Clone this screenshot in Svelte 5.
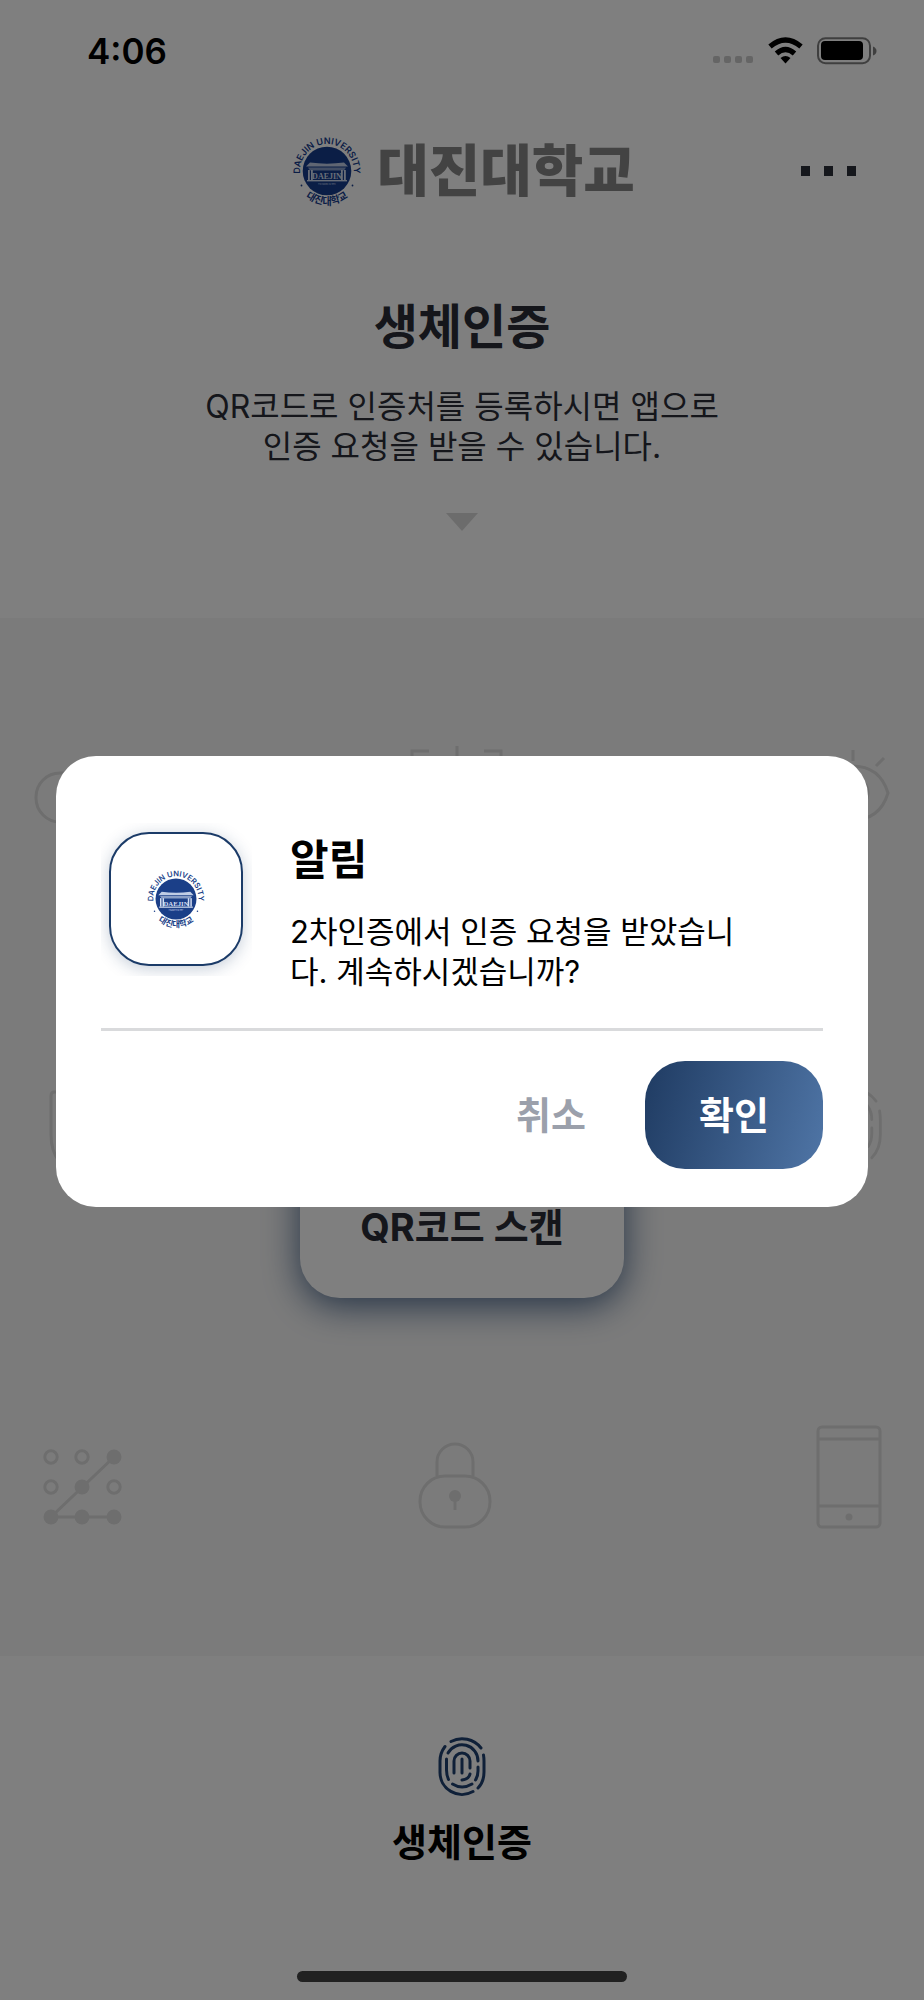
<script lang="ts">
  const seals = { header: 'seal-header', dialog: 'seal-dialog' };
  const columns = [-18, -15, 15, 18];
</script>

{#snippet seal(id: string)}
  <svg class="seal" viewBox="-4 -4 76 76" role="img" aria-label="대진대학교">
    <defs>
      <path id="{id}-top" d="M14 52A26.900 26.900 0 1 1 54 52" />
      <path id="{id}-bottom" d="M2 44A33.500 33.500 0 0 0 66 44" />
    </defs>
    <circle cx="34" cy="34" r="24.300" fill="currentColor" />
    <text class="ring" text-anchor="middle"><textPath href="#{id}-top" startOffset="50%">DAEJIN UNIVERSITY</textPath></text>
    <text class="ring korean" text-anchor="middle"><textPath href="#{id}-bottom" startOffset="50%">대진대학교</textPath></text>
    <circle cx="8.500" cy="48.500" r="0.900" fill="currentColor" />
    <circle cx="59.500" cy="48.500" r="0.900" fill="currentColor" />
    <g class="hall">
      <path d="M17 25.500C28 27 40 27 51 25.500L55 29.500H13Z" opacity="0.900" />
      <path d="M15 30.500H53L51 33.500H17Z" opacity="0.600" />
      {#each columns as x}
        <rect x={33 + x} y="33" width="1.800" height="10" />
      {/each}
      <text x="34" y="42" text-anchor="middle" class="hall-name">DAEJIN</text>
      <rect x="14" y="43" width="40" height="1.400" />
      <text x="34" y="48" text-anchor="middle" class="founded">FOUNDED IN 1992</text>
    </g>
  </svg>
{/snippet}

{#snippet fingerprint()}
  <path d="M13 5.500A24 24 0 0 1 43 12" />
  <path d="M7 10.500Q2 17 2 25V36A22 22 0 0 0 35 55.500" />
  <path d="M45.500 19Q46 22 46 25V36Q46 46 40 52" />
  <path d="M10 17A16 16 0 0 1 40 25" />
  <path d="M8.500 23V34Q8.500 39 10.500 43.500" />
  <path d="M40 31V35Q40 40 37.500 44" />
  <path d="M14.500 48Q24 54 34 48" />
  <path d="M16 37V25A8 8 0 0 1 32 25V32" />
  <path d="M24 23V37" />
  <path d="M32 38Q31 43 24 44" />
{/snippet}

<div class="screen">
  <div class="status">
    <time>4:06</time>
    <svg class="indicators" viewBox="0 0 166 28" aria-hidden="true">
      <g opacity="0.200">
        <rect x="1" y="19" width="7" height="7" rx="2" />
        <rect x="12" y="19" width="7" height="7" rx="2" />
        <rect x="23" y="19" width="7" height="7" rx="2" />
        <rect x="34" y="19" width="7" height="7" rx="2" />
      </g>
      <path d="M73.500 26.500L68.500 21Q73.500 17 78.500 21Z" />
      <path d="M64.500 16.500Q73.500 8.500 82.500 16.500M58 9.500Q73.500 -3.500 89 9.500" fill="none" stroke="#000" stroke-width="5.200" />
      <rect x="106" y="1.200" width="52" height="25" rx="7.500" fill="none" stroke="#000" stroke-width="2" opacity="0.500" />
      <rect x="109" y="4" width="42" height="19" rx="4" />
      <path d="M161 9.500Q164.500 11 164.500 14T161 18.500Z" opacity="0.500" />
    </svg>
  </div>

  <header>
    <div class="brand">
      <div class="brand-seal">{@render seal(seals.header)}</div>
      <span class="brand-name">대진대학교</span>
    </div>
    <button class="more" aria-label="메뉴"><i></i><i></i><i></i></button>
  </header>

  <section class="intro">
    <h1>생체인증</h1>
    <p>QR코드로 인증처를 등록하시면 앱으로<br />인증 요청을 받을 수 있습니다.</p>
    <svg class="arrow" viewBox="0 0 32 18" aria-hidden="true"><path d="M0 0H32L16 18Z" /></svg>
  </section>

  <main>
    <div class="row">
      <svg class="method" viewBox="0 0 112 112" aria-hidden="true">
        <rect x="8" y="37" width="96" height="49" rx="24" />
      </svg>
      <svg class="method" viewBox="0 0 112 112" aria-hidden="true">
        <path d="M6 32V15H23M78 15H95V32M51 10V40M6 80V98H23M78 98H95V80" />
      </svg>
      <svg class="method" viewBox="0 0 112 112" aria-hidden="true">
        <path d="M33 57Q40 30 68 30Q96 30 104 57Q96 84 68 84Q40 84 33 57ZM69 14V25M100 22L92 30M38 22L46 30" />
        <circle cx="69" cy="57" r="15" />
      </svg>
    </div>
    <div class="row">
      <svg class="method" viewBox="0 0 112 112" aria-hidden="true">
        <path d="M26 14H84Q88 14 88 18V57Q88 88 55 100Q23 88 23 57V18Q23 14 26 14Z" />
      </svg>
      <button class="scan">QR코드 스캔</button>
      <svg class="method" viewBox="0 0 112 112" aria-hidden="true">
        <g class="print" transform="translate(31 6) scale(1.420)">{@render fingerprint()}</g>
      </svg>
    </div>
    <div class="row">
      <svg class="method" viewBox="0 0 112 112" aria-hidden="true">
        <path d="M86 37L23 97H86" />
        <g class="hollow">
          <circle cx="23" cy="37" r="6.200" /><circle cx="54" cy="37" r="6.200" />
          <circle cx="23" cy="67" r="6.200" /><circle cx="86" cy="67" r="6.200" />
        </g>
        <g class="dot">
          <circle cx="86" cy="37" r="7.500" /><circle cx="54" cy="67" r="7.500" />
          <circle cx="23" cy="97" r="7.500" /><circle cx="54" cy="97" r="7.500" /><circle cx="86" cy="97" r="7.500" />
        </g>
      </svg>
      <svg class="method" viewBox="0 0 112 112" aria-hidden="true">
        <path d="M31 56V42A18 18 0 0 1 67 42V56" />
        <rect x="14" y="56" width="70" height="51" rx="25" />
        <circle class="dot" cx="49" cy="76" r="6" />
        <path d="M49 76V90" />
      </svg>
      <svg class="method" viewBox="0 0 112 112" aria-hidden="true">
        <rect x="34" y="7" width="62" height="100" rx="4" />
        <path d="M34 19H96M34 86H96" />
        <circle class="dot" cx="65" cy="97" r="3.500" />
      </svg>
    </div>
  </main>

  <nav>
    <a href="#biometric">
      <svg viewBox="0 0 48 60" aria-hidden="true">{@render fingerprint()}</svg>
      <span>생체인증</span>
    </a>
    <div class="home"></div>
  </nav>

  <div class="overlay">
    <div class="dialog" role="alertdialog" aria-modal="true" aria-labelledby="alert-title" aria-describedby="alert-text">
      <div class="message">
        <div class="app-icon"><div class="tile"><div class="tile-seal">{@render seal(seals.dialog)}</div></div></div>
        <div class="copy">
          <h2 id="alert-title">알림</h2>
          <p id="alert-text">2차인증에서 인증 요청을 받았습니다. 계속하시겠습니까?</p>
        </div>
      </div>
      <div class="actions">
        <button class="cancel">취소</button>
        <button class="confirm">확인</button>
      </div>
    </div>
  </div>
</div>

<style>
  :global(body) { margin: 0; }
  * { box-sizing: border-box; }
  h1, h2, p { margin: 0; }
  button { border: 0; padding: 0; background: none; font: inherit; color: inherit; cursor: pointer; }
  svg { display: block; }
  .screen {
    position: relative;
    display: flex;
    flex-direction: column;
    min-height: 100vh;
    background: #fff;
    color: #2a2d37;
    font-family: Inter, "Noto Sans CJK KR", sans-serif;
  }

  .status {
    display: flex;
    justify-content: space-between;
    align-items: center;
    height: 102px;
    padding: 0 46px 0 87px;
    color: #000;
  }
  time { font-size: 35px; font-weight: 600; line-height: 40px; }
  .indicators { width: 166px; height: 28px; }

  header {
    display: grid;
    grid-template-columns: 1fr auto 1fr;
    align-items: center;
    height: 138px;
    padding: 0 68px;
  }
  .brand { grid-column: 2; display: flex; align-items: center; gap: 12px; }
  .brand-seal { width: 76px; color: #163d8d; }
  .brand-name { font-size: 56px; font-weight: 900; line-height: 68px; color: #868686; }
  .seal { width: 100%; overflow: visible; }
  .ring { font-size: 9px; font-weight: 600; fill: currentColor; }
  .korean { font-size: 10px; font-weight: 700; }
  .hall { fill: #d3ddf0; }
  .hall-name { font-family: "Liberation Serif", serif; font-size: 8px; font-weight: 700; }
  .founded { font-size: 2px; }
  .more { justify-self: end; display: flex; gap: 14px; padding: 12px 0; }
  .more i { width: 9px; height: 10px; background: #2b2f39; }

  .intro {
    display: flex;
    flex-direction: column;
    align-items: center;
    padding: 51px 48px 87px;
    text-align: center;
  }
  h1 { font-size: 48px; font-weight: 700; line-height: 72px; }
  p { font-size: 32px; line-height: 40px; }
  .intro p { margin-top: 24px; }
  .arrow { width: 32px; height: 18px; margin-top: 46px; fill: #d8d8d8; }

  main {
    display: flex;
    flex-direction: column;
    gap: 122px;
    padding: 118px 28px 124px;
    background: #f7f7f7;
  }
  .row { display: flex; justify-content: space-between; align-items: center; }
  .method {
    width: 112px;
    height: 112px;
    fill: none;
    stroke: #dcdcdc;
    stroke-width: 3;
  }
  .print { stroke-width: 2; stroke-linecap: round; }
  .dot { fill: #dcdcdc; stroke: none; }
  .hollow { fill: #f7f7f7; }
  .scan {
    display: flex;
    justify-content: center;
    align-items: flex-end;
    width: 324px;
    height: 328px;
    padding-bottom: 47px;
    border-radius: 40px;
    background: #fff;
    box-shadow: 0 8px 36px #1f4270cc;
    font-size: 38px;
    font-weight: 700;
    line-height: 48px;
  }

  nav { display: flex; flex: 1; flex-direction: column; align-items: center; justify-content: space-between; padding: 80px 0 18px; }
  nav a { display: flex; flex-direction: column; align-items: center; gap: 22px; color: #000; text-decoration: none; }
  nav svg { width: 48px; height: 60px; fill: none; stroke: #1f4070; stroke-width: 3; stroke-linecap: round; }
  nav span { font-size: 38px; font-weight: 700; line-height: 48px; }
  .home { width: 330px; height: 11px; border-radius: 6px; background: #424242; }

  .overlay {
    position: absolute;
    inset: 0;
    display: flex;
    align-items: center;
    padding: 0 56px 38px;
    background: rgb(0 0 0 / 50%);
  }
  .dialog {
    flex: 1;
    padding: 67px 45px 38px;
    border-radius: 40px;
    background: #fff;
    color: #000;
  }
  .message { display: flex; gap: 38px; padding-bottom: 36px; border-bottom: 3px solid #d9dadc; }
  .app-icon { flex: none; align-self: flex-start; padding: 9px 9px 10px 8px; overflow: hidden; }
  .tile {
    display: grid;
    place-items: center;
    width: 134px;
    height: 134px;
    border: 2px solid #1b3b68;
    border-radius: 40px;
    background: #fff;
    box-shadow: 0 3px 16px #1b3b6840;
  }
  .tile-seal { width: 64px; color: #1b3f88; }
  .copy { padding: 7px 60px 0 0; }
  h2 { font-size: 42px; font-weight: 700; line-height: 60px; }
  .copy p { margin-top: 22px; font-size: 31px; }
  .actions { display: flex; justify-content: flex-end; gap: 20px; padding-top: 30px; font-size: 38px; font-weight: 700; }
  .cancel { width: 148px; padding-bottom: 4px; color: #9ba0ab; }
  .confirm {
    width: 178px;
    height: 108px;
    padding-bottom: 4px;
    border-radius: 40px;
    background: linear-gradient(105deg, #1f3b62, #4f75a6);
    color: #fff;
  }
</style>
